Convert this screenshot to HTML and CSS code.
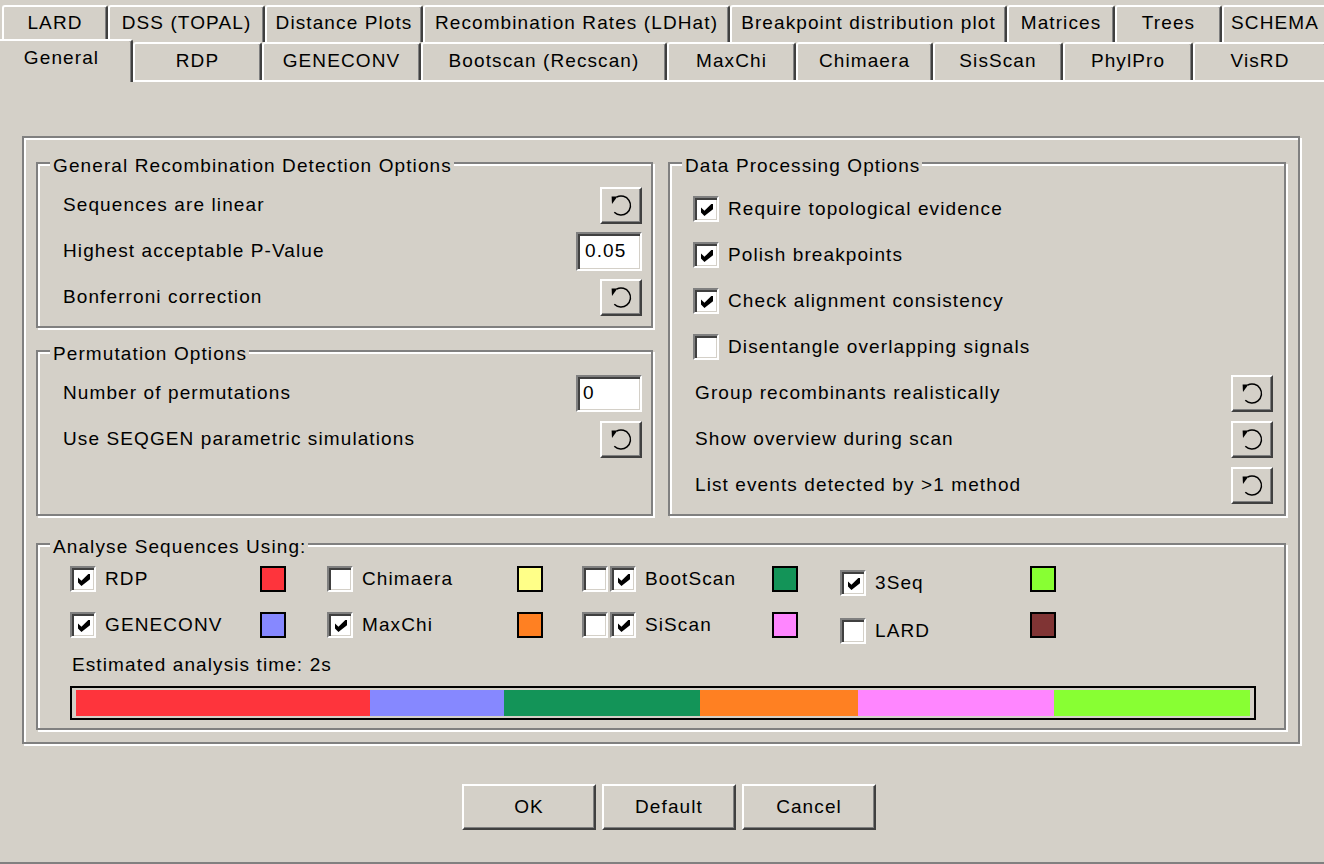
FILE: index.html
```html
<!DOCTYPE html>
<html lang="en">
<head>
<meta charset="utf-8">
<title>Options</title>
<link rel="stylesheet" href="styles.css">
</head>
<body>
<svg class="sprite" aria-hidden="true">
  <symbol id="tick" viewBox="0 0 7 7"><path d="M0 2L2 4L6 0L7 0L7 3L2 7L0 5Z"/></symbol>
  <symbol id="reset" viewBox="0 0 24 24">
    <path d="M7.7 4A9.5 9.5 0 1 1 5.3 19.2" fill="none" stroke="#000" stroke-width="1.5"/>
    <path d="M2.6 3.4H8.4L3 11Z"/>
  </symbol>
</svg>

<div class="tabstrip">
  <div class="tabrow tabrow-back">
    <div class="tab t-lard">LARD</div>
    <div class="tab t-dss">DSS (TOPAL)</div>
    <div class="tab t-dist">Distance Plots</div>
    <div class="tab t-ldhat">Recombination Rates (LDHat)</div>
    <div class="tab t-bp">Breakpoint distribution plot</div>
    <div class="tab t-mat">Matrices</div>
    <div class="tab t-trees">Trees</div>
    <div class="tab t-schema">SCHEMA</div>
  </div>
  <div class="tabrow tabrow-front">
    <div class="tab tab-active t-general">General</div>
    <div class="tab t-rdp">RDP</div>
    <div class="tab t-geneconv">GENECONV</div>
    <div class="tab t-boot">Bootscan (Recscan)</div>
    <div class="tab t-maxchi">MaxChi</div>
    <div class="tab t-chim">Chimaera</div>
    <div class="tab t-sis">SisScan</div>
    <div class="tab t-phyl">PhylPro</div>
    <div class="tab t-visrd">VisRD</div>
  </div>
</div>

<div class="panel">
  <div class="frame">
    <div class="frame-top">
      <section class="group g-general">
        <div class="group-title">General Recombination Detection Options</div>
        <div class="opt-row"><span>Sequences are linear</span><button class="raised reset"><svg class="reset-icon"><use href="#reset"/></svg></button></div>
        <div class="opt-row"><span>Highest acceptable P-Value</span><div class="field">0.05</div></div>
        <div class="opt-row"><span>Bonferroni correction</span><button class="raised reset"><svg class="reset-icon"><use href="#reset"/></svg></button></div>
      </section>

      <section class="group g-perm">
        <div class="group-title">Permutation Options</div>
        <div class="opt-row"><span>Number of permutations</span><div class="field field-short">0</div></div>
        <div class="opt-row"><span>Use SEQGEN parametric simulations</span><button class="raised reset"><svg class="reset-icon"><use href="#reset"/></svg></button></div>
      </section>

      <section class="group g-data">
        <div class="group-title">Data Processing Options</div>
        <div class="opt-row"><label class="check"><span class="cb"><svg class="tick"><use href="#tick"/></svg></span><span>Require topological evidence</span></label></div>
        <div class="opt-row"><label class="check"><span class="cb"><svg class="tick"><use href="#tick"/></svg></span><span>Polish breakpoints</span></label></div>
        <div class="opt-row"><label class="check"><span class="cb"><svg class="tick"><use href="#tick"/></svg></span><span>Check alignment consistency</span></label></div>
        <div class="opt-row"><label class="check"><span class="cb"></span><span>Disentangle overlapping signals</span></label></div>
        <div class="opt-row"><span>Group recombinants realistically</span><button class="raised reset"><svg class="reset-icon"><use href="#reset"/></svg></button></div>
        <div class="opt-row"><span>Show overview during scan</span><button class="raised reset"><svg class="reset-icon"><use href="#reset"/></svg></button></div>
        <div class="opt-row"><span>List events detected by &gt;1 method</span><button class="raised reset"><svg class="reset-icon"><use href="#reset"/></svg></button></div>
      </section>
    </div>

    <section class="group g-analyse">
      <div class="group-title">Analyse Sequences Using:</div>
      <div class="seq-grid">
        <div class="seq"><label class="check"><span class="cb"><svg class="tick"><use href="#tick"/></svg></span><span>RDP</span></label><span class="swatch c-rdp"></span></div>
        <div class="seq"><label class="check"><span class="cb"></span><span>Chimaera</span></label><span class="swatch c-chim"></span></div>
        <div class="seq"><label class="check"><span class="cb-pair"><span class="cb"></span><span class="cb"><svg class="tick"><use href="#tick"/></svg></span></span><span>BootScan</span></label><span class="swatch c-boot"></span></div>
        <div class="seq"><label class="check low-a"><span class="cb"><svg class="tick"><use href="#tick"/></svg></span><span>3Seq</span></label><span class="swatch c-3seq"></span></div>

        <div class="seq"><label class="check"><span class="cb"><svg class="tick"><use href="#tick"/></svg></span><span>GENECONV</span></label><span class="swatch c-geneconv"></span></div>
        <div class="seq"><label class="check"><span class="cb"><svg class="tick"><use href="#tick"/></svg></span><span>MaxChi</span></label><span class="swatch c-maxchi"></span></div>
        <div class="seq"><label class="check"><span class="cb-pair"><span class="cb"></span><span class="cb"><svg class="tick"><use href="#tick"/></svg></span></span><span>SiScan</span></label><span class="swatch c-siscan"></span></div>
        <div class="seq"><label class="check low-b"><span class="cb"></span><span>LARD</span></label><span class="swatch c-lard"></span></div>
      </div>
      <div class="estimate">Estimated analysis time: 2s</div>
      <div class="timebar">
        <span class="seg c-rdp" style="width:294px"></span>
        <span class="seg c-geneconv" style="width:134px"></span>
        <span class="seg c-boot" style="width:196px"></span>
        <span class="seg c-maxchi" style="width:158px"></span>
        <span class="seg c-siscan" style="width:196px"></span>
        <span class="seg c-3seq" style="width:196px"></span>
      </div>
    </section>
  </div>

  <div class="actions">
    <button class="raised btn">OK</button>
    <button class="raised btn">Default</button>
    <button class="raised btn">Cancel</button>
  </div>
</div>
</body>
</html>
```

FILE: styles.css
```css
* { box-sizing: border-box; }

html, body { margin: 0; padding: 0; }

body {
  width: 1324px;
  height: 864px;
  overflow: hidden;
  background: #d4d0c8;
  color: #000;
  font-family: "Liberation Sans", Arial, sans-serif;
  font-size: 19px;
  line-height: 22px;
  letter-spacing: 1.1px;
}

.sprite { position: absolute; width: 0; height: 0; overflow: hidden; }

button {
  font: inherit;
  letter-spacing: inherit;
  color: inherit;
  margin: 0;
  padding: 0;
}

/* ---------- tabs ---------- */
.tabstrip { height: 80px; }

.tabrow { display: flex; }

.tabrow-back { height: 42px; padding-top: 5px; padding-left: 2px; }

.tabrow-front { height: 38px; }

.tab {
  flex: none;
  height: 37px;
  padding-top: 5px;
  text-align: center;
  white-space: nowrap;
  border-top: 2px solid #fff;
  border-left: 2px solid #fff;
  border-right: 2px solid #404040;
  border-radius: 3px 3px 0 0;
  box-shadow: inset -1px 0 0 #808080;
  background: #d4d0c8;
}

.tabrow-front .tab { height: 38px; padding-top: 6px; }

.tabrow-front .tab-active {
  position: relative;
  z-index: 2;
  height: 43px;
  margin-top: -3px;
  padding-top: 6px;
  padding-right: 8px;
  border-left: 0;
  border-radius: 0 3px 0 0;
}

.t-lard { width: 106px; }
.t-dss { width: 157px; }
.t-dist { width: 158px; }
.t-ldhat { width: 307px; }
.t-bp { width: 277px; }
.t-mat { width: 108px; }
.t-trees { width: 107px; }
.t-schema { width: 106px; }

.t-general { width: 133px; }
.t-rdp { width: 129px; }
.t-geneconv { width: 159px; }
.t-boot { width: 246px; }
.t-maxchi { width: 129px; }
.t-chim { width: 137px; }
.t-sis { width: 130px; }
.t-phyl { width: 130px; }
.t-visrd { width: 134px; }

/* ---------- panel ---------- */
.panel {
  height: 784px;
  padding: 54px 24px 0 22px;
  border-top: 2px solid #fff;
  border-bottom: 2px solid #808080;
}

.frame {
  height: 608px;
  padding: 24px 12px 12px 12px;
  border: 2px solid #808080;
  box-shadow: inset 2px 2px 0 #fff, 2px 2px 0 #fff;
}

.frame-top {
  display: grid;
  grid-template-columns: 617px 1fr;
  grid-template-rows: 166px 166px;
  column-gap: 15px;
  row-gap: 22px;
}

.group {
  position: relative;
  border: 2px solid #808080;
  box-shadow: inset 2px 2px 0 #fff, 2px 2px 0 #fff;
}

.group-title {
  position: absolute;
  top: -9px;
  left: 12px;
  padding: 0 2px 0 3px;
  background: #d4d0c8;
  white-space: nowrap;
}

.g-general { padding: 18px 9px 0 25px; }
.g-perm { padding: 18px 9px 0 25px; }
.g-data { grid-column: 2; grid-row: 1 / 3; padding: 22px 11px 0 25px; }

.opt-row {
  display: flex;
  align-items: center;
  justify-content: space-between;
  height: 46px;
}

.check {
  display: flex;
  align-items: center;
  gap: 9px;
}

.g-data .check { margin-left: -2px; }

.cb-pair { display: flex; gap: 2px; }

.cb {
  flex: none;
  width: 26px;
  height: 26px;
  display: flex;
  align-items: center;
  justify-content: center;
  background: #fff;
  border: 2px solid;
  border-color: #808080 #fff #fff #808080;
  box-shadow: inset 2px 2px 0 #404040, inset -1px -1px 0 #d4d0c8;
}

.tick { width: 12px; height: 12px; fill: #000; margin: 1px 0 0 1px; }

.raised {
  background: #d4d0c8;
  border: 2px solid;
  border-color: #fff #404040 #404040 #fff;
  box-shadow: inset -1px -1px 0 #808080;
}

.reset {
  flex: none;
  width: 42px;
  height: 37px;
  display: flex;
  align-items: center;
  justify-content: center;
}

.reset-icon { width: 24px; height: 24px; fill: #000; }

.field {
  flex: none;
  width: 66px;
  height: 39px;
  display: flex;
  align-items: center;
  padding-left: 7px;
  background: #fff;
  border: 2px solid;
  border-color: #808080 #fff #fff #808080;
  box-shadow: inset 2px 2px 0 #404040, inset -1px -1px 0 #d4d0c8;
}

.field-short { height: 37px; padding-left: 5px; }

/* ---------- analyse group ---------- */
.g-analyse {
  margin-top: 27px;
  height: 187px;
  padding: 11px 29px 0 32px;
}

.seq-grid {
  display: grid;
  grid-template-columns: 257px 255px 258px 257px;
  grid-auto-rows: 46px;
}

.seq {
  display: grid;
  grid-template-columns: 190px 26px;
  align-items: center;
}

.low-a { margin-top: 8px; }
.low-b { margin-top: 12px; }

.swatch {
  width: 26px;
  height: 26px;
  border: 2px solid #000;
}

.c-rdp { background: #fe343c; }
.c-geneconv { background: #8688ff; }
.c-chim { background: #ffff88; }
.c-maxchi { background: #ff8022; }
.c-boot { background: #139458; }
.c-siscan { background: #ff86ff; }
.c-3seq { background: #88ff33; }
.c-lard { background: #803434; }

.estimate { margin: 6px 0 0 2px; }

.timebar {
  display: flex;
  width: 1186px;
  height: 34px;
  margin-top: 10px;
  padding: 2px 4px;
  border: 2px solid #000;
}

.seg { display: block; height: 100%; flex: none; }

/* ---------- bottom buttons ---------- */
.actions {
  display: flex;
  gap: 6px;
  margin-top: 40px;
  padding-left: 440px;
}

.btn {
  width: 134px;
  height: 46px;
  text-align: center;
}
```
